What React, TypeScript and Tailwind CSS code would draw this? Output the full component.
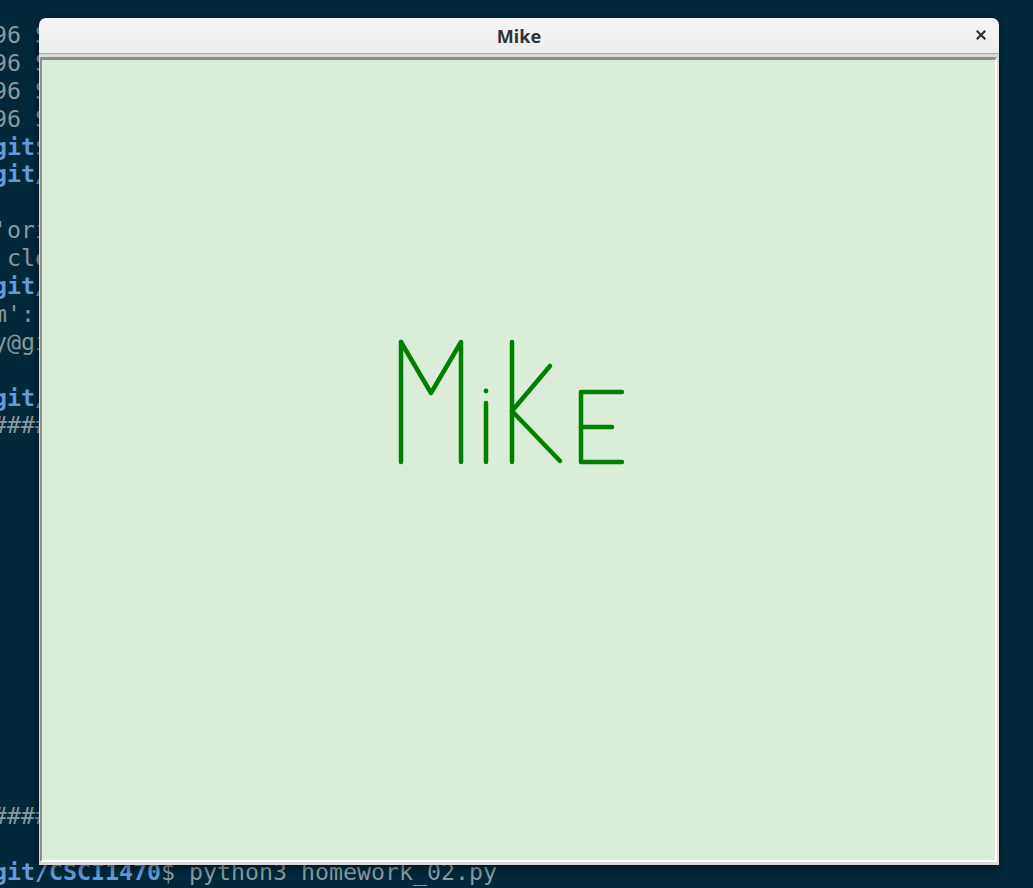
import React from "react";

const mono = { fontFamily: '"DejaVu Sans Mono", "Liberation Mono", monospace' };

type Line = { p?: string; t?: string };

const lines: Line[] = [
  { t: "96 Sep 14 09:12 CSCI1470" },
  { t: "96 Sep 10 11:40 dotfiles" },
  { t: "96 Sep  2 16:05 notes" },
  { t: "96 Sep  1 20:31 sandbox" },
  { p: "git", t: "$ cd CSCI1470" },
  { p: "git/CSCI1470", t: "$ git status" },
  {},
  { t: "'origin/master'." },
  { t: " clean" },
  { p: "git/CSCI1470", t: "$ git push" },
  { t: "m': mikeh1470" },
  { t: "y@github.com':" },
  {},
  { p: "git/CSCI1470", t: "$ python3 homework_01.py" },
  { t: "##########################################" },
  {},
  {},
  {},
  {},
  {},
  {},
  {},
  {},
  {},
  {},
  {},
  {},
  {},
  { t: "##########################################" },
  {},
  { p: "git/CSCI1470", t: "$ python3 homework_02.py" },
];

function Terminal() {
  return (
    <div
      className="pt-[21px] -ml-[7px] text-[23.25px] leading-[27.9px] text-[#8a9a9c] whitespace-pre"
      style={mono}
    >
      {lines.map((l, i) => (
        <div key={i} className="h-[27.9px]">
          {l.p && <span className="font-bold text-[#6399d9]">{l.p}</span>}
          {l.t && <span>{l.t}</span>}
        </div>
      ))}
    </div>
  );
}

function CloseIcon() {
  return (
    <svg width="10" height="10" viewBox="0 0 10 10">
      <path d="M1.5 1.5 L8.5 8.5 M8.5 1.5 L1.5 8.5" stroke="#2e3436" strokeWidth="2.2" strokeLinecap="square" />
    </svg>
  );
}

function Drawing() {
  const s = { stroke: "#008000", strokeWidth: 4.5, strokeLinecap: "round" as const, strokeLinejoin: "round" as const, fill: "none" };
  return (
    <svg className="block" width="953" height="800" viewBox="42 60 953 800">
      {/* M */}
      <polyline points="401,342 401,462" {...s} />
      <polyline points="401,342 431,393 461,342 461,462" {...s} />
      {/* i */}
      <circle cx="486" cy="391" r="2.4" fill="#008000" />
      <line x1="486" y1="403" x2="486" y2="462" {...s} />
      {/* K */}
      <line x1="512" y1="342" x2="512" y2="462" {...s} />
      <line x1="512" y1="411" x2="550" y2="366" {...s} />
      <line x1="512" y1="411" x2="560" y2="461" {...s} />
      {/* E */}
      <polyline points="622,392 581,392 581,462 622,462" {...s} />
      <line x1="581" y1="427" x2="612" y2="427" {...s} />
    </svg>
  );
}

function Window() {
  return (
    <div className="absolute left-[39px] top-[18px] w-[960px] h-[847px] flex flex-col rounded-t-[7px] shadow-[0_2px_10px_rgba(0,0,0,0.55)]">
      <div className="relative h-[35px] flex items-center justify-center rounded-t-[7px] bg-gradient-to-b from-[#f6f6f6] to-[#ededed] border-b border-[#a9aaa8] box-content">
        <span
          className="text-[18px] font-bold text-[#2e3436] leading-none"
          style={{ fontFamily: '"Noto Sans", "Open Sans", sans-serif' }}
        >
          Mike
        </span>
        <div className="absolute right-[13px] top-[12px]">
          <CloseIcon />
        </div>
      </div>
      <div className="flex-1 bg-[#d9d9d9] pt-[3px] pl-[1px] pr-[2px] pb-[3px]">
        <div className="border-t-[3px] border-l-[2px] border-r-[2px] border-b-[2px] border-t-[#8a8f8a] border-l-[#8a8f8a] border-r-white border-b-white bg-[#d9edd8] w-[957px] h-[805px]">
          <Drawing />
        </div>
      </div>
    </div>
  );
}

export default function App() {
  return (
    <div className="relative w-[1033px] h-[888px] overflow-hidden bg-[#01293a]">
      <Terminal />
      <Window />
    </div>
  );
}
